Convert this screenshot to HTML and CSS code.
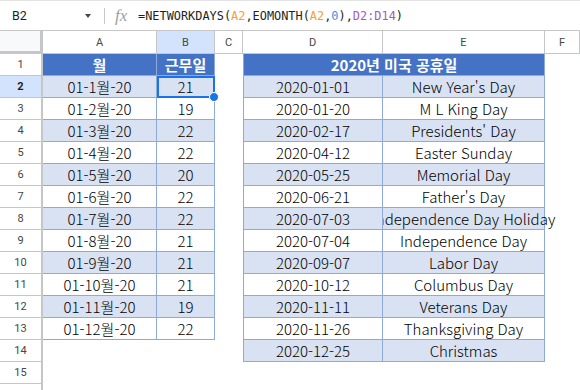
FILE: index.html
```html
<!DOCTYPE html>
<html lang="ko">
<head>
    <meta charset="UTF-8">
    <meta name="viewport" content="width=device-width, initial-scale=1.0">
    <title>근무일 계산</title>
    <link rel="stylesheet" href="styles.css">
</head>
<body>
    <!-- Barra de fórmulas -->
    <div class="formula-bar">
        <div class="name-box"><span>B2</span><span class="caret"></span></div>
        <div class="divider"></div>
        <span class="fx">fx</span>
        <div class="formula">=NETWORKDAYS(<span class="ref-a">A2</span>,EOMONTH(<span class="ref-a">A2</span>,<span class="num">0</span>),<span class="ref-d">D2:D14</span>)</div>
    </div>

    <!-- Hoja -->
    <div class="sheet" id="sheet">
        <div class="corner"></div>
        <div class="col-head">A</div>
        <div class="col-head active">B</div>
        <div class="col-head">C</div>
        <div class="col-head">D</div>
        <div class="col-head">E</div>
        <div class="col-head">F</div>
    </div>

    <script>
        // Datos de la tabla de meses
        const months = [
            ['01-1월-20', 21], ['01-2월-20', 19], ['01-3월-20', 22], ['01-4월-20', 22],
            ['01-5월-20', 20], ['01-6월-20', 22], ['01-7월-20', 22], ['01-8월-20', 21],
            ['01-9월-20', 21], ['01-10월-20', 21], ['01-11월-20', 19], ['01-12월-20', 22]
        ];

        // Días festivos
        const holidays = [
            ['2020-01-01', "New Year's Day"],
            ['2020-01-20', 'M L King Day'],
            ['2020-02-17', "Presidents' Day"],
            ['2020-04-12', 'Easter Sunday'],
            ['2020-05-25', 'Memorial Day'],
            ['2020-06-21', "Father's Day"],
            ['2020-07-03', 'Independence Day Holiday'],
            ['2020-07-04', 'Independence Day'],
            ['2020-09-07', 'Labor Day'],
            ['2020-10-12', 'Columbus Day'],
            ['2020-11-11', 'Veterans Day'],
            ['2020-11-26', 'Thanksgiving Day'],
            ['2020-12-25', 'Christmas']
        ];

        const sheet = document.getElementById('sheet');

        function cell(text, className) {
            const div = document.createElement('div');
            div.className = className;
            div.textContent = text;
            sheet.appendChild(div);
            return div;
        }

        for (let r = 1; r <= 16; r++) {
            // La fila 16 queda cortada por el borde de la ventana
            cell(r < 16 ? r : '', r === 2 ? 'row-head active' : 'row-head');
            const band = r % 2 === 0 ? ' band' : '';

            // Columnas A y B
            if (r === 1) {
                cell('월', 'cell t head');
                cell('근무일', 'cell t head');
            } else if (r <= 13) {
                cell(months[r - 2][0], 'cell t' + band);
                cell(months[r - 2][1], 'cell t' + band + (r === 2 ? ' selected' : ''));
            } else {
                cell('', 'cell');
                cell('', 'cell');
            }

            cell('', 'cell');

            // Columnas D y E
            if (r === 1) {
                cell('2020년 미국 공휴일', 'cell t head first merged');
            } else if (r <= 14) {
                cell(holidays[r - 2][0], 'cell t first' + band);
                cell(holidays[r - 2][1], 'cell t' + band);
            } else {
                cell('', 'cell');
                cell('', 'cell');
            }

            cell('', 'cell');
        }
    </script>
</body>
</html>
```

FILE: styles.css
```css
/* Estilos generales */
body {
    margin: 0;
    font-family: Roboto, "Noto Sans CJK KR", sans-serif;
    background-color: #fff;
    overflow: hidden;
}

/* Barra de fórmulas */
.formula-bar {
    display: flex;
    align-items: center;
    height: 29px;
    border-top: 1px solid #e3e3e3;
    border-bottom: 1px solid #c7c7c7;
}

.name-box {
    width: 96px;
    box-sizing: border-box;
    padding: 0 5px 0 12px;
    display: flex;
    align-items: center;
    justify-content: space-between;
    font-size: 12.5px;
    color: #1f1f1f;
}

.caret {
    width: 0;
    height: 0;
    border-left: 3.5px solid transparent;
    border-right: 3.5px solid transparent;
    border-top: 4px solid #444746;
}

.divider {
    width: 1px;
    height: 16px;
    margin-left: 8px;
    background-color: #c7c7c7;
}

.fx {
    width: 23px;
    margin-left: 10px;
    font-family: "Liberation Serif", serif;
    font-style: italic;
    font-size: 17px;
    color: #a0a0a0;
}

.formula {
    font-family: "DejaVu Sans Mono", monospace;
    font-size: 11.9px;
    color: #1f1f1f;
    white-space: nowrap;
}

.ref-a { color: #f2a13a; }
.num { color: #4a8be8; }
.ref-d { color: #a35bbf; }

/* Cuadrícula */
.sheet {
    display: grid;
    grid-template-columns: 43px 114px 58px 28px 140px 162px 1fr;
    grid-template-rows: 23px;
    grid-auto-rows: 22px;
}

.sheet > div {
    box-sizing: border-box;
}

.corner {
    background-color: #f8f9fa;
    border-right: 3px solid #c4c7c5;
    border-bottom: 3px solid #c4c7c5;
}

.col-head,
.row-head {
    display: flex;
    align-items: center;
    justify-content: center;
    font-size: 11px;
    color: #444746;
}

.col-head {
    border-right: 1px solid #c4c7c5;
    border-bottom: 1px solid #c4c7c5;
}

.row-head {
    border-right: 2px solid #c4c7c5;
    border-bottom: 1px solid #c4c7c5;
}

.col-head.active,
.row-head.active {
    background-color: #d3e3fd;
}

.row-head.active {
    font-weight: bold;
    color: #1f1f1f;
}

/* Celdas */
.cell {
    display: flex;
    align-items: center;
    justify-content: center;
    font-family: "Noto Sans CJK KR", sans-serif;
    font-size: 15px;
    font-weight: 300;
    color: #000;
    white-space: nowrap;
}

.t {
    background-color: #fff;
    border-right: 1px solid #8eaadb;
    border-bottom: 1px solid #8eaadb;
}

.t.band {
    background-color: #d9e2f3;
}

.t.head {
    background-color: #4472c4;
    color: #fff;
    font-weight: bold;
}

/* La columna D tapa el texto desbordado de E */
.t.first {
    border-left: 1px solid #8eaadb;
    position: relative;
    z-index: 1;
}

.merged {
    grid-column: span 2;
}

/* Celda seleccionada */
.selected {
    position: relative;
}

.selected::after {
    content: '';
    position: absolute;
    top: 0;
    left: 0;
    right: -1px;
    bottom: -1px;
    border: 2px solid #1a73e8;
    z-index: 2;
}

.selected::before {
    content: '';
    position: absolute;
    right: -5px;
    bottom: -5px;
    width: 8px;
    height: 8px;
    border: 1px solid #fff;
    border-radius: 50%;
    background-color: #1a73e8;
    z-index: 3;
}
```
